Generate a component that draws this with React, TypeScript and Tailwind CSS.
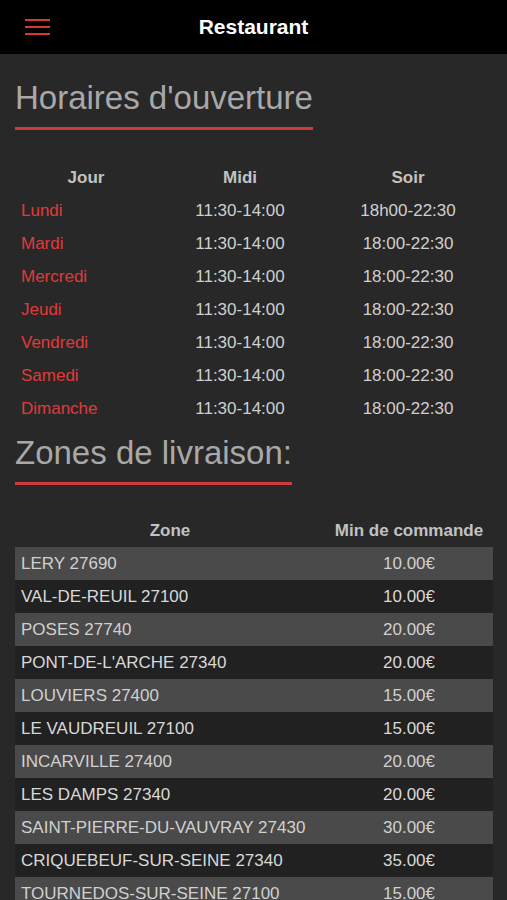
const hours = [
  { day: 'Lundi', midi: '11:30-14:00', soir: '18h00-22:30' },
  { day: 'Mardi', midi: '11:30-14:00', soir: '18:00-22:30' },
  { day: 'Mercredi', midi: '11:30-14:00', soir: '18:00-22:30' },
  { day: 'Jeudi', midi: '11:30-14:00', soir: '18:00-22:30' },
  { day: 'Vendredi', midi: '11:30-14:00', soir: '18:00-22:30' },
  { day: 'Samedi', midi: '11:30-14:00', soir: '18:00-22:30' },
  { day: 'Dimanche', midi: '11:30-14:00', soir: '18:00-22:30' },
];

const zones = [
  { zone: 'LERY 27690', min: '10.00€' },
  { zone: 'VAL-DE-REUIL 27100', min: '10.00€' },
  { zone: 'POSES 27740', min: '20.00€' },
  { zone: "PONT-DE-L'ARCHE 27340", min: '20.00€' },
  { zone: 'LOUVIERS 27400', min: '15.00€' },
  { zone: 'LE VAUDREUIL 27100', min: '15.00€' },
  { zone: 'INCARVILLE 27400', min: '20.00€' },
  { zone: 'LES DAMPS 27340', min: '20.00€' },
  { zone: 'SAINT-PIERRE-DU-VAUVRAY 27430', min: '30.00€' },
  { zone: 'CRIQUEBEUF-SUR-SEINE 27340', min: '35.00€' },
  { zone: 'TOURNEDOS-SUR-SEINE 27100', min: '15.00€' },
];

function SectionTitle({ children }: { children: string }) {
  return (
    <div className="px-[15px]">
      <h2 className="inline-block border-b-[3px] border-[#d23a3a] pb-[13px] text-[33px] leading-none text-[#a8a8a8]">
        {children}
      </h2>
    </div>
  );
}

export default function App() {
  return (
    <div className="h-[900px] overflow-hidden bg-[#282828] font-['Liberation_Sans',Arial,sans-serif]">
      <header className="relative flex h-[54px] items-center justify-center bg-black">
        <button className="absolute left-[25px] top-[19px] flex w-[25px] flex-col gap-[5px]">
          <span className="h-[2px] w-full bg-[#d63838]" />
          <span className="h-[2px] w-full bg-[#d63838]" />
          <span className="h-[2px] w-full bg-[#d63838]" />
        </button>
        <h1 className="text-[21px] font-bold text-white">Restaurant</h1>
      </header>

      <div className="pt-[27px]">
        <SectionTitle>Horaires d'ouverture</SectionTitle>
      </div>

      <div className="mx-[15px] mt-[31px] text-[17px]">
        <div className="grid h-[33px] grid-cols-[142px_166px_170px] items-center text-center font-bold text-[#c2c2c2]">
          <span>Jour</span>
          <span>Midi</span>
          <span>Soir</span>
        </div>
        {hours.map((h) => (
          <div
            key={h.day}
            className="grid h-[33px] grid-cols-[142px_166px_170px] items-center text-[#cfcfcf]"
          >
            <span className="pl-[6px] text-[#e03a3a]">{h.day}</span>
            <span className="text-center">{h.midi}</span>
            <span className="text-center">{h.soir}</span>
          </div>
        ))}
      </div>

      <div className="pt-[11px]">
        <SectionTitle>Zones de livraison:</SectionTitle>
      </div>

      <div className="mx-[15px] mr-[14px] mt-[29px] text-[17px]">
        <div className="grid h-[33px] grid-cols-[310px_1fr] items-center text-center font-bold text-[#c2c2c2]">
          <span>Zone</span>
          <span>Min de commande</span>
        </div>
        {zones.map((z, i) => (
          <div
            key={z.zone}
            className={
              i % 2 === 0
                ? 'grid h-[33px] grid-cols-[310px_1fr] items-center bg-[#4a4a4a] text-[#d0d0d0]'
                : 'grid h-[33px] grid-cols-[310px_1fr] items-center bg-[#212121] text-[#d8d8d8]'
            }
          >
            <span className="whitespace-nowrap pl-[6px]">{z.zone}</span>
            <span className="text-center">{z.min}</span>
          </div>
        ))}
      </div>
    </div>
  );
}
